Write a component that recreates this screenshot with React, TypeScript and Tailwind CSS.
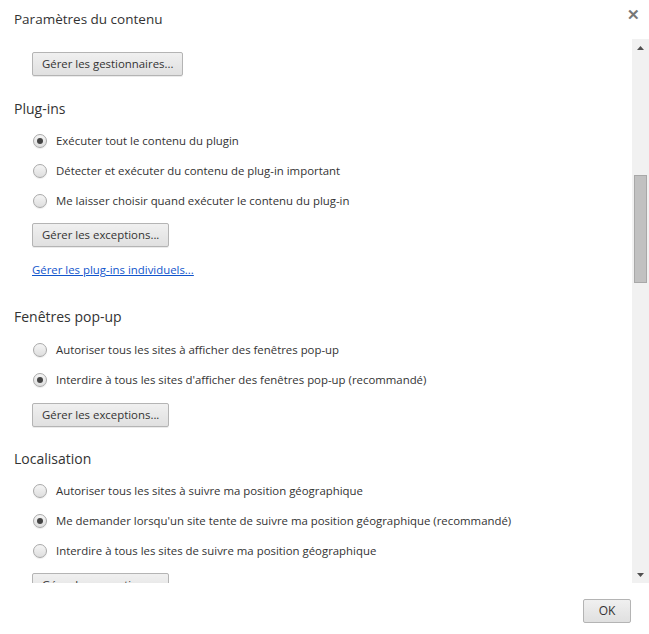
import { ReactNode } from 'react';

const font = { fontFamily: '"Open Sans", "Noto Sans", Arial, sans-serif' };

function Radio({ checked, children }: { checked?: boolean; children: ReactNode }) {
    return (
        <div className="flex h-[30px] items-center pl-[33px]">
            <span className="flex h-[14px] w-[14px] items-center justify-center rounded-full border border-[#a9a9a9] bg-gradient-to-b from-[#f5f5f5] to-[#dedede] shadow-[0_1px_1px_rgba(0,0,0,0.08)]">
                {checked && <span className="h-[6px] w-[6px] rounded-full bg-[#444]" />}
            </span>
            <span className="ml-[9px] text-[11.4px] text-[#333]">{children}</span>
        </div>
    );
}

function Btn({ children, className = '' }: { children: ReactNode; className?: string }) {
    return (
        <button
            type="button"
            className={`ml-[32px] flex h-[24px] items-center rounded-[2px] border border-[#b4b4b4] bg-gradient-to-b from-[#f0f0f0] to-[#e0e0e0] px-[9px] text-[11.4px] text-[#333] shadow-[0_1px_0_rgba(0,0,0,0.08)] ${className}`}
        >
            {children}
        </button>
    );
}

function Heading({ children, className = '' }: { children: ReactNode; className?: string }) {
    return <div className={`flex h-[20px] items-center pl-[14px] text-[14px] text-[#333] ${className}`}>{children}</div>;
}

export default function App() {
    return (
        <div className="relative h-[634px] w-[649px] overflow-hidden bg-white" style={font}>
            <div className="flex h-[39px] items-start justify-between">
                <div className="pl-[14px] pt-[9px] text-[13.5px] leading-[20px] text-[#333]">Paramètres du contenu</div>
                <div className="pr-[9px] pt-[3px] text-[15px] font-bold text-[#777]">✕</div>
            </div>

            <div className="flex h-[544px]">
                <div className="flex-1 overflow-hidden pt-[13px]">
                    <Btn>Gérer les gestionnaires...</Btn>

                    <Heading className="mt-[22px]">Plug-ins</Heading>
                    <div className="mt-[8px]">
                        <Radio checked>Exécuter tout le contenu du plugin</Radio>
                        <Radio>Détecter et exécuter du contenu de plug-in important</Radio>
                        <Radio>Me laisser choisir quand exécuter le contenu du plug-in</Radio>
                    </div>
                    <Btn className="mt-[7px]">Gérer les exceptions...</Btn>
                    <div className="mt-[13px] flex h-[20px] items-center pl-[32px]">
                        <a href="#" className="text-[11.4px] text-[#1155cc] underline">Gérer les plug-ins individuels...</a>
                    </div>

                    <Heading className="mt-[26px]">Fenêtres pop-up</Heading>
                    <div className="mt-[9px]">
                        <Radio>Autoriser tous les sites à afficher des fenêtres pop-up</Radio>
                        <Radio checked>Interdire à tous les sites d'afficher des fenêtres pop-up (recommandé)</Radio>
                    </div>
                    <Btn className="mt-[8px]">Gérer les exceptions...</Btn>

                    <Heading className="mt-[21px]">Localisation</Heading>
                    <div className="mt-[8px]">
                        <Radio>Autoriser tous les sites à suivre ma position géographique</Radio>
                        <Radio checked>Me demander lorsqu'un site tente de suivre ma position géographique (recommandé)</Radio>
                        <Radio>Interdire à tous les sites de suivre ma position géographique</Radio>
                    </div>
                    <Btn className="mt-[7px]">Gérer les exceptions...</Btn>
                </div>

                <div className="flex w-[17px] flex-col bg-[#f1f1f1]">
                    <div className="flex h-[17px] items-center justify-center">
                        <svg width="7" height="4" viewBox="0 0 7 4"><path d="M0 4 L3.5 0 L7 4 Z" fill="#505050" /></svg>
                    </div>
                    <div className="mt-[119px] ml-[2px] h-[108px] w-[13px] border border-[#a8a8a8] bg-[#c1c1c1]" />
                    <div className="flex-1" />
                    <div className="flex h-[17px] items-center justify-center">
                        <svg width="7" height="4" viewBox="0 0 7 4"><path d="M0 0 L3.5 4 L7 0 Z" fill="#505050" /></svg>
                    </div>
                </div>
            </div>

            <div className="flex justify-end pr-[18px] pt-[16px]">
                <button
                    type="button"
                    className="flex h-[24px] w-[48px] items-center justify-center rounded-[2px] border border-[#b4b4b4] bg-gradient-to-b from-[#f0f0f0] to-[#e0e0e0] text-[12px] text-[#333]"
                >
                    OK
                </button>
            </div>
        </div>
    );
}
